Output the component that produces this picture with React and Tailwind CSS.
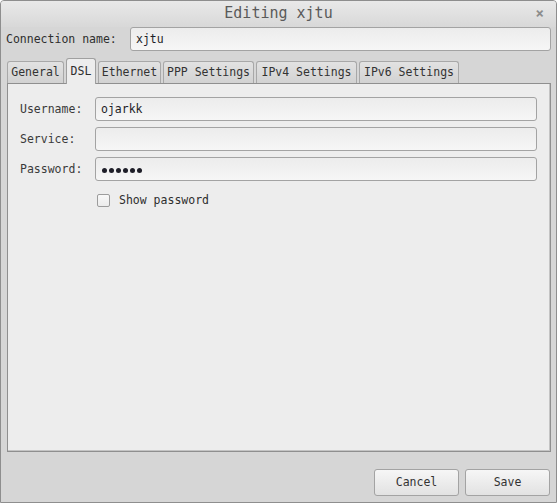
import React from "react";

const mono = { fontFamily: '"DejaVu Sans Mono", "Liberation Mono", monospace' };

function Entry({ children, className = "" }) {
  return (
    <div
      className={
        "flex-1 h-[24px] box-border border border-[#a3a3a3] rounded-[3px] bg-gradient-to-b from-[#ececec] to-[#f6f6f6] flex items-center pl-[5px] pt-[2px] text-[11.5px] text-[#1e1e28] " +
        className
      }
    >
      {children}
    </div>
  );
}

function Tab({ label, w, active }) {
  if (active) {
    return (
      <div
        className={`${w} h-[26px] -mb-px relative z-10 box-border border border-b-0 border-[#a0a0a0] rounded-t-[3px] bg-[#ededed] flex items-start justify-center pt-[4px] text-[11.5px] text-[#2e2e2e]`}
      >
        {label}
      </div>
    );
  }
  return (
    <div
      className={`${w} h-[22px] box-border border border-b-0 border-[#a8a8a8] rounded-t-[3px] bg-gradient-to-b from-[#e2e2e2] to-[#d2d2d2] flex items-center justify-center text-[11.5px] text-[#333]`}
    >
      {label}
    </div>
  );
}

export default function App() {
  return (
    <div
      style={mono}
      className="w-[557px] h-[503px] box-border border border-[#8e8e8e] rounded-t-[4px] bg-[#d6d6d6] flex flex-col overflow-hidden"
    >
      {/* title bar */}
      <div className="h-[26px] shrink-0 grid grid-cols-[1fr_auto_1fr] items-center bg-gradient-to-b from-[#e9e9e9] to-[#d8d8d8]">
        <div />
        <div className="text-[15px] text-[#5a5a5a] leading-none pb-[2px]">Editing xjtu</div>
        <div className="flex justify-end pr-[12px] pb-[2px] text-[14px] font-bold text-[#8c8c8c] leading-none">×</div>
      </div>

      {/* connection name */}
      <div className="h-[24px] shrink-0 flex items-center pl-[5px] pr-[5px]">
        <div className="w-[124px] pt-[2px] text-[11.5px] text-[#2e2e2e]">Connection name:</div>
        <Entry>xjtu</Entry>
      </div>

      {/* tabs */}
      <div className="h-[25px] mt-[7px] shrink-0 flex items-end gap-[2px] pl-[6px]">
        <Tab label="General" w="w-[57px]" />
        <Tab label="DSL" w="w-[30px]" active />
        <Tab label="Ethernet" w="w-[63px]" />
        <Tab label="PPP Settings" w="w-[91px]" />
        <Tab label="IPv4 Settings" w="w-[101px]" />
        <Tab label="IPv6 Settings" w="w-[100px]" />
      </div>

      {/* panel */}
      <div className="h-[369px] shrink-0 ml-[6px] mr-[5px] box-border border border-[#8f8f8f] bg-[#ededed] shadow-[inset_-1px_-1px_0_#c4c4c4] pt-[13px] pl-[12px] pr-[13px] flex flex-col gap-[6px]">
        <div className="h-[24px] flex items-center">
          <div className="w-[75px] pt-[2px] text-[11.5px] text-[#3a3a3a]">Username:</div>
          <Entry>ojarkk</Entry>
        </div>
        <div className="h-[24px] flex items-center">
          <div className="w-[75px] pt-[2px] text-[11.5px] text-[#3a3a3a]">Service:</div>
          <Entry />
        </div>
        <div className="h-[24px] flex items-center">
          <div className="w-[75px] pt-[2px] text-[11.5px] text-[#3a3a3a]">Password:</div>
          <Entry className="pl-[6px] gap-[2px]">
            {[0, 1, 2, 3, 4, 5].map((i) => (
              <span key={i} className="w-[5px] h-[5px] rounded-full bg-[#1e1e28]" />
            ))}
          </Entry>
        </div>
        <div className="h-[16px] mt-[5px] flex items-center pl-[77px]">
          <div className="w-[13px] h-[13px] box-border border border-[#9c9c9c] rounded-[2px] bg-gradient-to-b from-[#f8f8f8] to-[#ececec]" />
          <div className="ml-[9px] pt-[1px] text-[11.5px] text-[#2e2e2e]">Show password</div>
        </div>
      </div>

      {/* buttons */}
      <div className="mt-[17px] h-[27px] shrink-0 flex justify-end gap-[6px] pr-[6px]">
        <button className="w-[85px] h-[27px] box-border border border-[#a3a3a3] rounded-[3px] bg-gradient-to-b from-[#f6f6f6] to-[#e2e2e2] text-[11.5px] text-[#333]" style={mono}>
          Cancel
        </button>
        <button className="w-[85px] h-[27px] box-border border border-[#a3a3a3] rounded-[3px] bg-gradient-to-b from-[#f6f6f6] to-[#e2e2e2] text-[11.5px] text-[#333]" style={mono}>
          Save
        </button>
      </div>
    </div>
  );
}
